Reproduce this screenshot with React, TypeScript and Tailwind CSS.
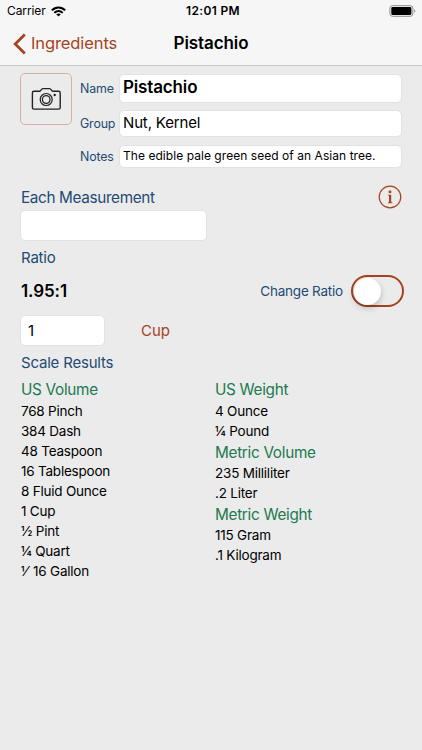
import React from "react";

function WifiIcon() {
  return (
    <svg className="ml-[5px] h-[11px] w-[15px]" viewBox="0 0 15 11" fill="none" stroke="#000">
      <path d="M0.9 4.4C4.6 0.5 10.4 0.5 14.1 4.4" strokeWidth="2.1" />
      <path d="M3.3 6.8C5.7 4.4 9.3 4.4 11.7 6.8" strokeWidth="1.9" />
      <path d="M7.5 10.6L5.2 8.3C6.5 7.1 8.5 7.1 9.8 8.3Z" fill="#000" stroke="none" />
    </svg>
  );
}

function BatteryIcon() {
  return (
    <svg className="h-[12px] w-[27px]" viewBox="0 0 27 12">
      <rect x="0.9" y="0.7" width="22.9" height="10.6" rx="2.6" fill="none" stroke="#8c8c8c" strokeWidth="1" />
      <rect x="2.3" y="2.1" width="20.1" height="7.8" rx="1.3" fill="#000" />
      <path d="M25.2 4.2C26.8 4.8 26.8 7.2 25.2 7.8Z" fill="#8c8c8c" />
    </svg>
  );
}

function CameraIcon() {
  return (
    <svg className="h-[24px] w-[31px]" viewBox="0 0 31 24" fill="none" stroke="#222">
      <path
        d="M3 4.3H8.4C9.6 4.3 10.3 1.6 11.8 1.6H18.6C20.1 1.6 20.8 4.3 22 4.3H27.6Q29.2 4.3 29.2 5.9V20.5Q29.2 22.1 27.6 22.1H3Q1.4 22.1 1.4 20.5V5.9Q1.4 4.3 3 4.3Z"
        strokeWidth="1.4"
        strokeLinejoin="round"
      />
      <circle cx="15.2" cy="12.5" r="6" strokeWidth="1.2" />
      <circle cx="15.2" cy="12.5" r="3.8" strokeWidth="1.3" />
      <circle cx="23.7" cy="8" r="1.2" fill="#222" stroke="none" />
    </svg>
  );
}

function InfoIcon() {
  return (
    <svg className="h-[24px] w-[24px]" viewBox="0 0 24 24" fill="#a5431f">
      <circle cx="12" cy="12" r="10.8" fill="none" stroke="#a5431f" strokeWidth="1.2" />
      <circle cx="12" cy="6.9" r="1.45" />
      <path d="M9.9 9.8H13.2V17.2L14.4 17.6V18.2H9.8V17.6L11 17.2V10.8L9.9 10.5Z" />
    </svg>
  );
}

const field = "flex items-center rounded-[5px] border border-[#e2e2e2] bg-white";
const label = "text-[#244a73]";

function Heading({ children }: { children: React.ReactNode }) {
  return (
    <h3 className="h-[22px] text-[15.3px] leading-[23px] tracking-[-0.3px] text-[#1c7a50] first:leading-[22px]">
      {children}
    </h3>
  );
}

function Rows({ items }: { items: string[] }) {
  return (
    <ul>
      {items.map((item) => (
        <li key={item} className="h-[20px] text-[13.5px] leading-[20px] tracking-[-0.22px] whitespace-pre">
          {item}
        </li>
      ))}
    </ul>
  );
}

export default function App() {
  return (
    <div className="flex h-[750px] w-[422px] flex-col overflow-hidden bg-[#ebebeb] font-['Inter','Liberation_Sans',sans-serif] whitespace-nowrap text-black">
      <header className="h-[66px] border-b border-[#c8c8c8] bg-[#f6f6f6]">
        <div className="grid h-[22px] grid-cols-3 items-center pr-[6px] pl-[7px] text-[12px]">
          <div className="flex items-center">
            <span className="w-[39px] tracking-[-0.1px]">Carrier</span>
            <WifiIcon />
          </div>
          <span className="pl-[3px] text-center font-semibold tracking-[0.35px]">12:01 PM</span>
          <div className="flex justify-end">
            <BatteryIcon />
          </div>
        </div>
        <div className="grid h-[43px] grid-cols-[1fr_auto_1fr] items-center px-[13px]">
          <div className="flex items-center text-[#a5431f]">
            <svg className="h-[22px] w-[13px]" viewBox="0 0 13 22" fill="none" stroke="currentColor" strokeWidth="2.8">
              <path d="M11.8 1.4L2.2 11L11.8 20.6" />
            </svg>
            <span className="ml-[5px] text-[16.5px] tracking-[-0.1px]">Ingredients</span>
          </div>
          <h1 className="text-[17px] font-semibold tracking-[-0.1px]">Pistachio</h1>
        </div>
      </header>

      <main className="flex flex-col pr-[20px] pl-[20px]">
        <section className="mt-[7px] flex">
          <div className="flex h-[52px] w-[52px] items-center justify-center rounded-[5px] border border-[#d8b0a3]">
            <CameraIcon />
          </div>
          <div className="ml-[8px] flex w-[322px] flex-col">
            <div className="flex h-[30px] items-center">
              <span className={`w-[39px] pt-[2px] text-[12.4px] tracking-[-0.15px] ${label}`}>Name</span>
              <div className={`h-[29px] w-[283px] px-[3px] text-[17px] font-semibold tracking-[-0.15px] ${field}`}>
                Pistachio
              </div>
            </div>
            <div className="mt-[7px] flex h-[27px] items-center">
              <span className={`w-[39px] pt-[2px] text-[12.4px] tracking-[-0.15px] ${label}`}>Group</span>
              <div className={`h-[27px] w-[283px] px-[3px] text-[15px] tracking-[-0.15px] ${field}`}>Nut, Kernel</div>
            </div>
            <div className="mt-[8px] flex h-[23px] items-center">
              <span className={`w-[39px] pt-[1px] text-[12.4px] tracking-[-0.15px] ${label}`}>Notes</span>
              <div className={`h-[23px] w-[283px] px-[3px] pb-[1px] text-[12px] tracking-[0.05px] ${field}`}>
                The edible pale green seed of an Asian tree.
              </div>
            </div>
          </div>
        </section>

        <section className="mt-[17px]">
          <div className="flex h-[24px] items-center justify-between">
            <span className={`pt-[2px] pl-[1px] text-[15.3px] tracking-[-0.35px] ${label}`}>Each Measurement</span>
            <InfoIcon />
          </div>
          <div className={`mt-[1px] h-[31px] w-[187px] ${field}`} />
        </section>

        <section className="mt-[5px]">
          <div className={`h-[24px] pl-[1px] text-[15px] leading-[24px] tracking-[-0.2px] ${label}`}>Ratio</div>
          <div className="mt-[5px] flex h-[32px] items-center justify-between">
            <span className="pt-[2px] pl-[1px] text-[17px] font-semibold tracking-[-0.1px]">1.95:1</span>
            <div className="-mr-[2px] flex items-center">
              <span className={`mr-[8px] text-[13.5px] tracking-[-0.22px] ${label}`}>Change Ratio</span>
              <div className="flex h-[32px] w-[53px] items-center rounded-full border-2 border-[#a5431f]">
                <div className="ml-[1px] h-[27px] w-[27px] rounded-full bg-white shadow-[0_3px_6px_rgba(0,0,0,0.22)]" />
              </div>
            </div>
          </div>
          <div className="mt-[8px] flex h-[31px] items-center">
            <div className={`h-[31px] w-[85px] px-[7px] pt-[1px] text-[15px] ${field}`}>1</div>
            <span className="ml-[36px] pt-[1px] text-[15px] text-[#a5431f]">Cup</span>
          </div>
        </section>

        <section className="mt-[5px]">
          <div className={`h-[24px] pl-[1px] text-[15px] leading-[24px] tracking-[-0.2px] ${label}`}>Scale Results</div>
          <div className="mt-[4px] grid grid-cols-[194px_1fr] pl-[1px]">
            <div>
              <Heading>US Volume</Heading>
              <Rows
                items={[
                  "768 Pinch",
                  "384 Dash",
                  "48 Teaspoon",
                  "16 Tablespoon",
                  "8 Fluid Ounce",
                  "1 Cup",
                  "½ Pint",
                  "¼ Quart",
                  "⅟\u2009 16 Gallon",
                ]}
              />
            </div>
            <div>
              <Heading>US Weight</Heading>
              <Rows items={["4 Ounce", "¼ Pound"]} />
              <Heading>Metric Volume</Heading>
              <Rows items={["235 Milliliter", ".2 Liter"]} />
              <Heading>Metric Weight</Heading>
              <Rows items={["115 Gram", ".1 Kilogram"]} />
            </div>
          </div>
        </section>
      </main>
    </div>
  );
}
